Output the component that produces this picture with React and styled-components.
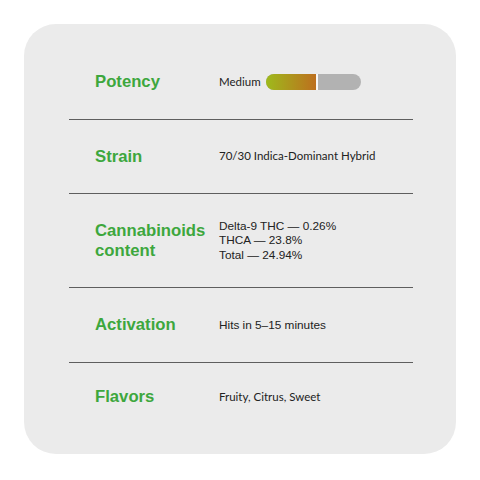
import React from "react";
import styled, { createGlobalStyle } from "styled-components";

const GlobalStyle = createGlobalStyle`
  body {
    margin: 0;
    background: #ffffff;
  }
`;

const Card = styled.div`
  width: 432px;
  margin: 24px;
  box-sizing: border-box;
  padding: 21px 43px 23px 45px;
  background: #ebebeb;
  border-radius: 32px;
`;

const Row = styled.div`
  display: grid;
  grid-template-columns: 124px 1fr;
  align-items: center;
  box-sizing: border-box;
  min-height: ${(props) => props.height || 75}px;
  padding-left: 26px;
  border-bottom: 1px solid #5e5e5e;

  &:last-child {
    border-bottom: none;
  }
`;

const Label = styled.div`
  font-family: "Liberation Sans", Arial, sans-serif;
  font-weight: bold;
  font-size: 16.7px;
  line-height: 20px;
  color: #3da73d;
`;

const Value = styled.div`
  font-family: ${(props) =>
    props.plain ? '"Liberation Sans", Arial, sans-serif' : "Lato, sans-serif"};
  font-size: ${(props) => (props.plain ? "11.8px" : "11.5px")};
  line-height: 14.5px;
  color: #222222;
`;

const Potency = styled.div`
  display: flex;
  align-items: center;
  gap: 5px;
`;

const Bar = styled.div`
  display: flex;
  width: 95px;
  height: 16px;
  border-radius: 8px;
  overflow: hidden;
  background: #b2b2b2;
`;

const Fill = styled.div`
  height: 100%;
  background: linear-gradient(to right, #9eba1c, #bd6f1e);
  border-right: 2px solid #f7f7f7;
`;

const rows = [
  { label: "Strain", value: "70/30 Indica-Dominant Hybrid", height: 74 },
  {
    label: "Cannabinoids content",
    lines: ["Delta-9 THC — 0.26%", "THCA — 23.8%", "Total — 24.94%"],
    plain: true,
    height: 94,
  },
  { label: "Activation", value: "Hits in 5–15 minutes", plain: true, height: 75 },
  { label: "Flavors", value: "Fruity, Citrus, Sweet", height: 68 },
];

export default function App() {
  return (
    <>
      <GlobalStyle />
      <Card>
        <Row height={75}>
          <Label>Potency</Label>
          <Potency>
            <Value>Medium</Value>
            <Bar>
              <Fill style={{ width: "50px" }} />
            </Bar>
          </Potency>
        </Row>
        {rows.map((row) => (
          <Row key={row.label} height={row.height}>
            <Label>
              {row.label === "Cannabinoids content" ? (
                <>
                  Cannabinoids
                  <br />
                  content
                </>
              ) : (
                row.label
              )}
            </Label>
            <Value plain={row.plain}>
              {row.lines
                ? row.lines.map((line) => <div key={line}>{line}</div>)
                : row.value}
            </Value>
          </Row>
        ))}
      </Card>
    </>
  );
}
